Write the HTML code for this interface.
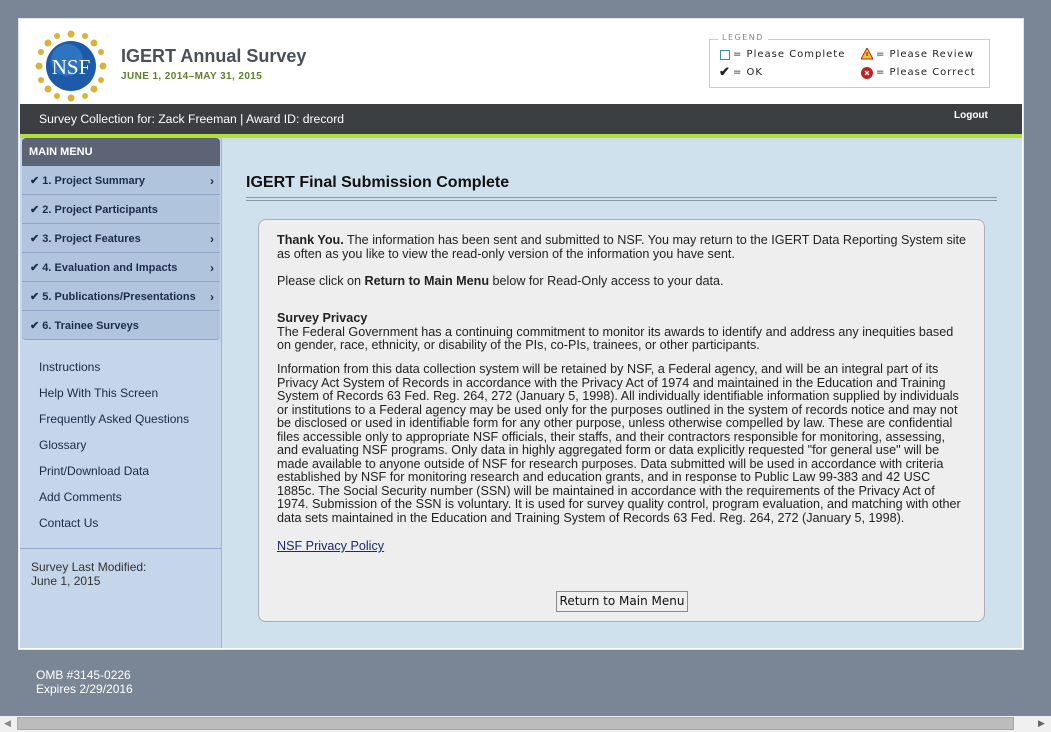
<!DOCTYPE html>
<html><head><meta charset="utf-8"><style>
*{margin:0;padding:0;box-sizing:border-box}
body{width:1051px;height:732px;background:#7a8595;font-family:"Liberation Sans",Arial,sans-serif;position:relative;overflow:hidden;font-size:12px;color:#222}
.a{position:absolute}
#frame{left:18px;top:18px;width:1006px;height:632px;background:#fff;border:1px solid #dfe6ee}
#hdr{left:20px;top:20px;width:1002px;height:84px;background:#fff}
#bar{left:20px;top:104px;width:1002px;height:30px;background:#3b3f42;color:#fff}
#green{left:20px;top:134px;width:1002px;height:4px;background:#b3e03a}
#side{left:20px;top:138px;width:202px;height:510px;background:#c5d5ea;border-right:1px solid #9fb3cf}
#main{left:222px;top:138px;width:800px;height:510px;background:#d0e1ee}
.mi{position:absolute;left:2px;width:198px;height:29px;background:#b0c4de;border-bottom:1px solid #8ea5c6;font-weight:bold;font-size:11px;color:#1d2c4a;line-height:31px;padding-left:8px}
.mi .ar{position:absolute;right:6px;top:0;font-size:12px}
.lk{position:absolute;left:39px;font-size:12px;color:#1c2a44}
#box{left:258px;top:219px;width:727px;height:403px;background:#eeeeee;border:1px solid #a6b0bb;border-radius:8px}
.t{position:absolute;left:277px;font-size:12.6px;line-height:13.5px;color:#222;white-space:nowrap}
</style></head><body>
<div class="a" id="frame"></div>
<div class="a" id="hdr"></div>
<svg class="a" style="left:35px;top:30px" width="72" height="72" viewBox="0 0 72 72">
<g fill="#d9b23a">
<circle cx="36" cy="4" r="3.5"/><circle cx="36" cy="68" r="3.5"/><circle cx="4" cy="36" r="3.5"/><circle cx="68" cy="36" r="3.5"/>
<circle cx="13" cy="13" r="3.5"/><circle cx="59" cy="13" r="3.5"/><circle cx="13" cy="59" r="3.5"/><circle cx="59" cy="59" r="3.5"/>
<circle cx="22" cy="6" r="3"/><circle cx="50" cy="6" r="3"/><circle cx="22" cy="66" r="3"/><circle cx="50" cy="66" r="3"/>
<circle cx="6" cy="22" r="3"/><circle cx="6" cy="50" r="3"/><circle cx="66" cy="22" r="3"/><circle cx="66" cy="50" r="3"/></g>
<circle cx="36" cy="36" r="25" fill="#1d5aa8"/><circle cx="32" cy="30" r="16" fill="#3c85d0" opacity=".6"/>
<text x="36" y="44" text-anchor="middle" font-family="Liberation Serif,serif" font-size="21" fill="#fff">NSF</text>
</svg>
<div class="a" style="left:121px;top:46px;font-size:18px;font-weight:bold;color:#4a5058">IGERT Annual Survey</div>
<div class="a" style="left:121px;top:71px;font-size:10px;font-weight:bold;color:#5f7f2a;letter-spacing:.4px">JUNE 1, 2014–MAY 31, 2015</div>
<div class="a" style="left:709px;top:39px;width:281px;height:49px;border:1px solid #ccc"></div>
<div class="a" style="left:718px;top:33px;background:#fff;padding:0 4px;font-size:8px;letter-spacing:1.5px;color:#888;font-family:'DejaVu Sans',sans-serif">LEGEND</div>
<div class="a" style="left:720px;top:50px;width:10px;height:10px;border:1px solid #3b8fa8"></div>
<div class="a" style="left:733px;top:49px;font-size:10px;letter-spacing:1px;color:#222;font-family:'DejaVu Sans',sans-serif">= Please Complete</div>
<div class="a" style="left:719px;top:64px;font-size:13px;font-weight:bold">✔</div>
<div class="a" style="left:733px;top:67px;font-size:10px;letter-spacing:1px;font-family:'DejaVu Sans',sans-serif">= OK</div>
<svg class="a" style="left:861px;top:48px" width="12" height="12"><polygon points="6,0 12,11 0,11" fill="#f1c232" stroke="#b3261e"/><rect x="5.4" y="4" width="1.3" height="4" fill="#b3261e"/></svg>
<div class="a" style="left:876px;top:49px;font-size:10px;letter-spacing:1px;font-family:'DejaVu Sans',sans-serif">= Please Review</div>
<svg class="a" style="left:861px;top:67px" width="12" height="12"><circle cx="6" cy="6" r="6" fill="#c0201e"/><path d="M4 4L8 8M8 4L4 8" stroke="#fff" stroke-width="1.3"/></svg>
<div class="a" style="left:876px;top:67px;font-size:10px;letter-spacing:1px;font-family:'DejaVu Sans',sans-serif">= Please Correct</div>
<div class="a" id="bar"><span class="a" style="left:19px;top:8px;font-size:12.2px">Survey Collection for: Zack Freeman | Award ID: drecord</span><span class="a" style="left:934px;top:6px;font-size:10px;font-weight:bold">Logout</span></div>
<div class="a" id="green"></div>
<div class="a" id="side">
<div class="a" style="left:2px;top:0;width:198px;height:28px;background:#5c6475;border-radius:4px 4px 0 0;color:#fff;font-weight:bold;font-size:11px;line-height:28px;padding-left:7px">MAIN MENU</div>
<div class="mi" style="top:28px">✔ 1. Project Summary<span class="ar">›</span></div>
<div class="mi" style="top:57px">✔ 2. Project Participants</div>
<div class="mi" style="top:86px">✔ 3. Project Features<span class="ar">›</span></div>
<div class="mi" style="top:115px">✔ 4. Evaluation and Impacts<span class="ar">›</span></div>
<div class="mi" style="top:144px">✔ 5. Publications/Presentations<span class="ar">›</span></div>
<div class="mi" style="top:173px;border-radius:0 0 4px 4px">✔ 6. Trainee Surveys</div>
<div class="a" style="left:0;top:410px;width:201px;height:1px;background:#93a9c9"></div>
<div class="a" style="left:11px;top:422px;font-size:12px;line-height:14px;color:#333">Survey Last Modified:<br>June 1, 2015</div>
</div>
<div class="lk" style="top:360px">Instructions</div>
<div class="lk" style="top:386px">Help With This Screen</div>
<div class="lk" style="top:412px">Frequently Asked Questions</div>
<div class="lk" style="top:438px">Glossary</div>
<div class="lk" style="top:464px">Print/Download Data</div>
<div class="lk" style="top:490px">Add Comments</div>
<div class="lk" style="top:516px">Contact Us</div>
<div class="a" id="main"></div>
<div class="a" style="left:246px;top:174px;font-size:16px;font-weight:bold;color:#111">IGERT Final Submission Complete</div>
<div class="a" style="left:246px;top:197px;width:751px;height:4px;border-top:1px solid #8a96a4;border-bottom:1px solid #8a96a4"></div>
<div class="a" id="box"></div>
<div class="t" style="top:234px"><b>Thank You.</b> The information has been sent and submitted to NSF. You may return to the IGERT Data Reporting System site<br>as often as you like to view the read-only version of the information you have sent.</div>
<div class="t" style="top:275px">Please click on <b>Return to Main Menu</b> below for Read-Only access to your data.</div>
<div class="t" style="top:312px"><b>Survey Privacy</b><br>The Federal Government has a continuing commitment to monitor its awards to identify and address any inequities based<br>on gender, race, ethnicity, or disability of the PIs, co-PIs, trainees, or other participants.</div>
<div class="t" style="top:363px">Information from this data collection system will be retained by NSF, a Federal agency, and will be an integral part of its<br>Privacy Act System of Records in accordance with the Privacy Act of 1974 and maintained in the Education and Training<br>System of Records 63 Fed. Reg. 264, 272 (January 5, 1998). All individually identifiable information supplied by individuals<br>or institutions to a Federal agency may be used only for the purposes outlined in the system of records notice and may not<br>be disclosed or used in identifiable form for any other purpose, unless otherwise compelled by law. These are confidential<br>files accessible only to appropriate NSF officials, their staffs, and their contractors responsible for monitoring, assessing,<br>and evaluating NSF programs. Only data in highly aggregated form or data explicitly requested "for general use" will be<br>made available to anyone outside of NSF for research purposes. Data submitted will be used in accordance with criteria<br>established by NSF for monitoring research and education grants, and in response to Public Law 99-383 and 42 USC<br>1885c. The Social Security number (SSN) will be maintained in accordance with the requirements of the Privacy Act of<br>1974. Submission of the SSN is voluntary. It is used for survey quality control, program evaluation, and matching with other<br>data sets maintained in the Education and Training System of Records 63 Fed. Reg. 264, 272 (January 5, 1998).</div>
<div class="t" style="top:540px;color:#1a2a6a;text-decoration:underline">NSF Privacy Policy</div>
<div class="a" style="left:556px;top:591px;width:132px;height:21px;border:1px solid #8a8a8a;background:#efefef;font-family:'DejaVu Sans',sans-serif;font-size:12px;line-height:19px;text-align:center;color:#111">Return to Main Menu</div>
<div class="a" style="left:36px;top:668px;color:#fff;font-size:12px;line-height:14px">OMB #3145-0226<br>Expires 2/29/2016</div>
<div class="a" style="left:0;top:716px;width:1051px;height:16px;background:#f0f0f0"></div>
<div class="a" style="left:17px;top:717px;width:997px;height:13px;background:#bcbcbc;border:1px solid #a8a8a8"></div>
<div class="a" style="left:4px;top:718px;font-size:9px;color:#888">◀</div>
<div class="a" style="left:1038px;top:718px;font-size:9px;color:#666">▶</div>
</body></html>
